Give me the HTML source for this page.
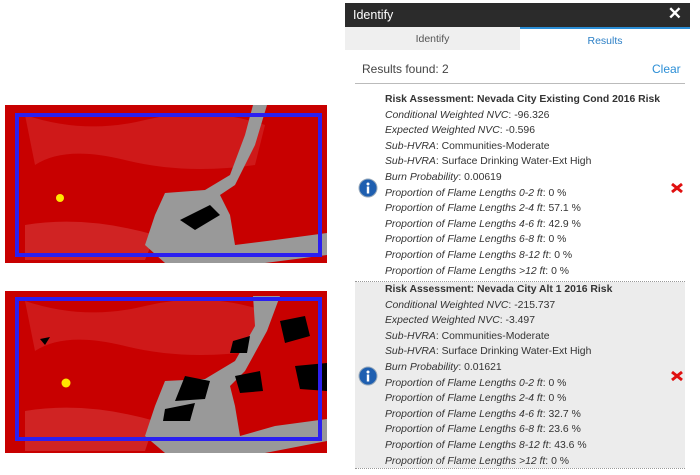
<!DOCTYPE html>
<html><head><style>
body{margin:0;width:700px;height:475px;background:#fff;position:relative;overflow:hidden;font-family:"Liberation Sans",sans-serif;}
.abs{position:absolute}
.hdr{left:345px;top:3px;width:345px;height:24px;background:#2b2b2b;color:#fff;font-size:12.5px}
.tab1{left:345px;top:27px;width:175px;height:23px;background:#efefef;color:#555;font-size:10.5px;text-align:center;line-height:25px}
.tab2{left:520px;top:27px;width:170px;height:21px;border-top:2px solid #2b8ed6;color:#2b7fc6;font-size:10.5px;text-align:center;line-height:25px}
.res{font-size:12px;color:#444}
.blk{left:355px;width:330px;font-size:10.4px;color:#333}
.blk div{height:15.6px;line-height:15.6px;padding-left:30px;white-space:nowrap}
.blk b{color:#333}
i{font-style:italic}
</style></head><body>
<svg class="abs" style="left:5px;top:105px" width="322" height="158">
<rect width="322" height="158" fill="#c80000"/>
<path d="M20 10 Q80 30 140 15 T260 20 L250 60 Q180 70 120 55 T30 60Z" fill="#d42a2a" opacity=".6"/>
<path d="M20 120 Q80 110 150 130 L140 155 L20 155Z" fill="#d63a3a" opacity=".6"/>
<path d="M248 0 L262 0 L250 40 L230 80 L215 90 L225 110 L230 140 L270 135 L322 128 L322 150 L260 158 L160 158 L140 140 L150 110 L160 88 L200 85 L225 70 L240 30Z" fill="#999"/>
<path d="M175 115 L205 100 L215 110 L190 125Z" fill="#000"/>
<rect x="12" y="10" width="303" height="140" fill="none" stroke="#2b1ff0" stroke-width="4"/>
<circle cx="55" cy="93" r="4" fill="#ffe600"/>
</svg>
<svg class="abs" style="left:5px;top:291px" width="322" height="162">
<rect width="322" height="162" fill="#c80000"/>
<path d="M20 10 Q80 30 140 15 T260 20 L250 60 Q180 70 120 55 T30 60Z" fill="#d42a2a" opacity=".6"/>
<path d="M20 120 Q80 110 150 130 L140 160 L20 160Z" fill="#d63a3a" opacity=".6"/>
<path d="M248 5 L275 5 L262 40 L240 80 L225 95 L230 115 L235 145 L270 135 L322 128 L322 150 L260 162 L160 162 L140 145 L150 115 L160 90 L200 88 L230 70 L250 35Z" fill="#999"/>
<path d="M275 30 L300 25 L305 45 L280 52Z M228 50 L245 45 L242 62 L225 62Z M230 85 L255 80 L258 100 L235 102Z M180 85 L205 90 L200 108 L170 110Z M160 118 L190 112 L185 130 L158 130Z M290 75 L322 72 L322 100 L295 98Z M35 48 L45 46 L40 54Z" fill="#000"/>
<rect x="12" y="8" width="303" height="140" fill="none" stroke="#2b1ff0" stroke-width="4"/>
<circle cx="61" cy="92" r="4.5" fill="#ffe600"/>
</svg>

<div class="abs hdr"><span style="position:absolute;left:8px;top:5px">Identify</span><span style="position:absolute;right:8px;top:1px;font-size:17px;font-weight:bold">✕</span></div>
<div class="abs tab1">Identify</div>
<div class="abs tab2">Results</div>
<div class="abs res" style="left:362px;top:62px">Results found: 2</div>
<div class="abs" style="left:652px;top:62px;font-size:12px;color:#2b8ed6">Clear</div>
<div class="abs" style="left:355px;top:83px;width:330px;height:1px;background:#bbb"></div>

<div class="abs blk" style="top:92px">
<div><b>Risk Assessment: Nevada City Existing Cond 2016 Risk</b></div>
<div><i>Conditional Weighted NVC</i>: -96.326</div>
<div><i>Expected Weighted NVC</i>: -0.596</div>
<div><i>Sub-HVRA</i>: Communities-Moderate</div>
<div><i>Sub-HVRA</i>: Surface Drinking Water-Ext High</div>
<div><i>Burn Probability</i>: 0.00619</div>
<div><i>Proportion of Flame Lengths 0-2 ft</i>: 0 %</div>
<div><i>Proportion of Flame Lengths 2-4 ft</i>: 57.1 %</div>
<div><i>Proportion of Flame Lengths 4-6 ft</i>: 42.9 %</div>
<div><i>Proportion of Flame Lengths 6-8 ft</i>: 0 %</div>
<div><i>Proportion of Flame Lengths 8-12 ft</i>: 0 %</div>
<div><i>Proportion of Flame Lengths &gt;12 ft</i>: 0 %</div>
</div>
<div class="abs" style="left:355px;top:281px;width:330px;border-top:1px dotted #999"></div>
<div class="abs blk" style="top:282px;height:186px;background:#ececec">
<div><b>Risk Assessment: Nevada City Alt 1 2016 Risk</b></div>
<div><i>Conditional Weighted NVC</i>: -215.737</div>
<div><i>Expected Weighted NVC</i>: -3.497</div>
<div><i>Sub-HVRA</i>: Communities-Moderate</div>
<div><i>Sub-HVRA</i>: Surface Drinking Water-Ext High</div>
<div><i>Burn Probability</i>: 0.01621</div>
<div><i>Proportion of Flame Lengths 0-2 ft</i>: 0 %</div>
<div><i>Proportion of Flame Lengths 2-4 ft</i>: 0 %</div>
<div><i>Proportion of Flame Lengths 4-6 ft</i>: 32.7 %</div>
<div><i>Proportion of Flame Lengths 6-8 ft</i>: 23.6 %</div>
<div><i>Proportion of Flame Lengths 8-12 ft</i>: 43.6 %</div>
<div><i>Proportion of Flame Lengths &gt;12 ft</i>: 0 %</div>
</div>
<div class="abs" style="left:355px;top:468px;width:330px;border-top:1px dotted #999"></div>

<svg class="abs" style="left:358px;top:178px" width="20" height="20"><circle cx="10" cy="10" r="9" fill="#1f5fb0" stroke="#9ab" stroke-width="1"/><circle cx="10" cy="6" r="1.5" fill="#fff"/><rect x="8.8" y="8.5" width="2.4" height="7" fill="#fff"/></svg>
<svg class="abs" style="left:358px;top:366px" width="20" height="20"><circle cx="10" cy="10" r="9" fill="#1f5fb0" stroke="#9ab" stroke-width="1"/><circle cx="10" cy="6" r="1.5" fill="#fff"/><rect x="8.8" y="8.5" width="2.4" height="7" fill="#fff"/></svg>
<svg class="abs" style="left:670px;top:182px" width="14" height="12"><path d="M2 2 L12 10 M12 2 L2 10" stroke="#e01010" stroke-width="3"/></svg>
<svg class="abs" style="left:670px;top:370px" width="14" height="12"><path d="M2 2 L12 10 M12 2 L2 10" stroke="#e01010" stroke-width="3"/></svg>
</body></html>
